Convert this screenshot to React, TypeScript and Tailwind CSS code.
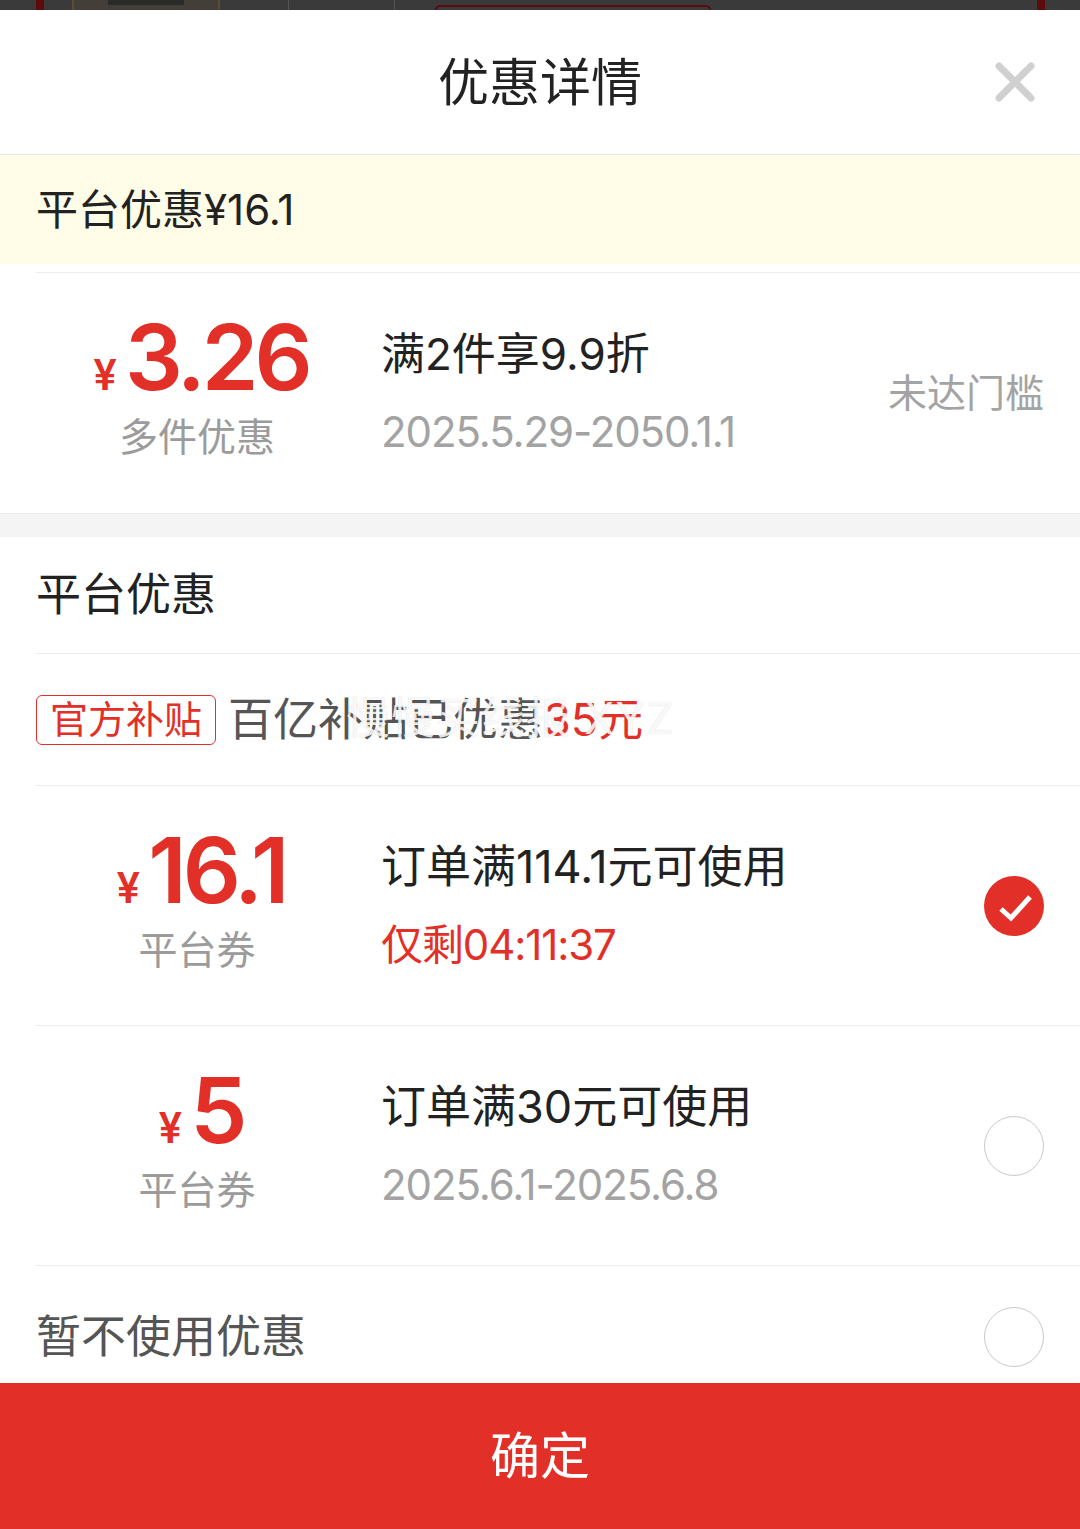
import { X } from "lucide-react";

const SANS = "font-['Inter','Noto_Sans_CJK_SC',sans-serif]";

function Amount({ value, label }: { value: string; label: string }) {
  return (
    <div className="w-[322px] shrink-0 flex flex-col items-center -mt-[13px]">
      <div className="flex items-baseline text-[#e23028] font-semibold h-[92px] leading-[92px] pl-[8px]">
        <span className="text-[42px] mr-[8px]">¥</span>
        <span className="text-[91px] tracking-[-4px]">{value}</span>
      </div>
      <div className="text-[39px] leading-[50px] text-[#9b9b9b] mt-[9px]">{label}</div>
    </div>
  );
}

function Radio({ checked }: { checked?: boolean }) {
  if (checked) {
    return (
      <div className="w-[60px] h-[60px] rounded-full bg-[#e23028]">
        <svg viewBox="0 0 60 60" className="w-[60px] h-[60px]" fill="none">
          <path d="M17 33l10 9 19-21" stroke="#fff" strokeWidth="5" />
        </svg>
      </div>
    );
  }
  return <div className="w-[60px] h-[60px] rounded-full border border-[#c9c9c9] bg-white" />;
}

function CouponRow({ value, label, title, sub, checked, red }: { value: string; label: string; title: string; sub: string; checked?: boolean; red?: boolean }) {
  return (
    <div className="ml-[36px] h-[240px] border-b border-[#ececec] flex items-center pr-[36px]">
      <Amount value={value} label={label} />
      <div className="ml-[23px] flex-1 flex flex-col gap-[20px]">
        <div className="text-[45px] leading-[58px] text-[#222]">{title}</div>
        <div className={`text-[42px] leading-[58px] tracking-[-1.1px] ${red ? "text-[#e23028]" : "text-[#a3a3a3]"}`}>{sub}</div>
      </div>
      <Radio checked={checked} />
    </div>
  );
}

export default function App() {
  return (
    <div className={`w-[1080px] h-[1529px] overflow-hidden bg-white flex flex-col ${SANS}`}>
      {/* dimmed page behind the sheet */}
      <div className="h-[10px] shrink-0 bg-[#3a3a3a] flex">
        <div className="ml-[36px] w-[8px] bg-[#5e0b0e]" />
        <div className="ml-[28px] w-[148px] bg-[#433f38] flex justify-center border-x-2 border-[#5a4d38]">
          <div className="w-[76px] h-[5px] bg-[#2a2a2a]" />
        </div>
        <div className="ml-[68px] w-px bg-[#555]" />
        <div className="ml-[105px] w-px bg-[#555]" />
        <div className="ml-[40px] mt-[5px] w-[276px] h-[5px] rounded-t-[6px] border-t-2 border-x-2 border-[#5e0b0e]" />
        <div className="ml-[326px] w-[8px] bg-[#5e0b0e]" />
      </div>

      {/* header */}
      <div className="h-[145px] shrink-0 border-b border-[#e8e8e8] flex items-center justify-center relative">
        <div className="text-[51px] text-[#222] leading-none">优惠详情</div>
        <X className="absolute right-[33px] top-[40px] w-[64px] h-[64px] text-[#d0d0d0]" strokeWidth={2.6} />
      </div>

      {/* banner */}
      <div className="h-[109px] shrink-0 bg-[#fffce8] flex items-center pl-[36px] text-[42px] text-[#222]">
        平台优惠¥16.1
      </div>

      {/* multi-item discount */}
      <div className="ml-[36px] mt-[8px] h-[241px] shrink-0 border-t border-[#ececec] flex items-center pr-[36px]">
        <Amount value="3.26" label="多件优惠" />
        <div className="ml-[23px] flex-1 flex flex-col gap-[20px]">
          <div className="text-[44px] leading-[58px] text-[#222]">满2件享9.9折</div>
          <div className="text-[42px] leading-[58px] tracking-[-1.1px] text-[#a3a3a3]">2025.5.29-2050.1.1</div>
        </div>
        <div className="text-[39px] text-[#a3a3a3]">未达门槛</div>
      </div>

      <div className="h-[24px] shrink-0 bg-[#f4f4f4] border-t border-[#ececec]" />

      {/* platform section */}
      <div className="h-[117px] shrink-0 ml-[36px] border-b border-[#ececec] flex items-center text-[45px] text-[#222]">平台优惠</div>

      <div className="h-[132px] shrink-0 ml-[36px] border-b border-[#ececec] flex items-center relative">
        <div className="w-[180px] h-[50px] border border-[#e23028] rounded-[6px] flex items-center justify-center text-[38px] text-[#e23028]">官方补贴</div>
        <div className="ml-[12px] text-[45px] text-[#555]">
          百亿补贴已优惠<span className="text-[#e23028]">35元</span>
        </div>
        {/* watermark over the line */}
        <div className="absolute left-[310px] top-[36px] text-[44px] tracking-[1px] text-white/85 [text-shadow:0_0_1px_rgba(0,0,0,0.18)] whitespace-nowrap leading-[56px]">慢慢买线报 XYZ</div>
      </div>

      <CouponRow value="16.1" label="平台券" title="订单满114.1元可使用" sub="仅剩04:11:37" checked red />
      <CouponRow value="5" label="平台券" title="订单满30元可使用" sub="2025.6.1-2025.6.8" />

      <div className="h-[117px] shrink-0 ml-[36px] pr-[36px] pt-[24px] flex items-center justify-between text-[45px] text-[#555]">
        暂不使用优惠
        <Radio />
      </div>

      <div className="flex-1 bg-[#e23028] flex items-center justify-center text-[50px] text-white">确定</div>
    </div>
  );
}
